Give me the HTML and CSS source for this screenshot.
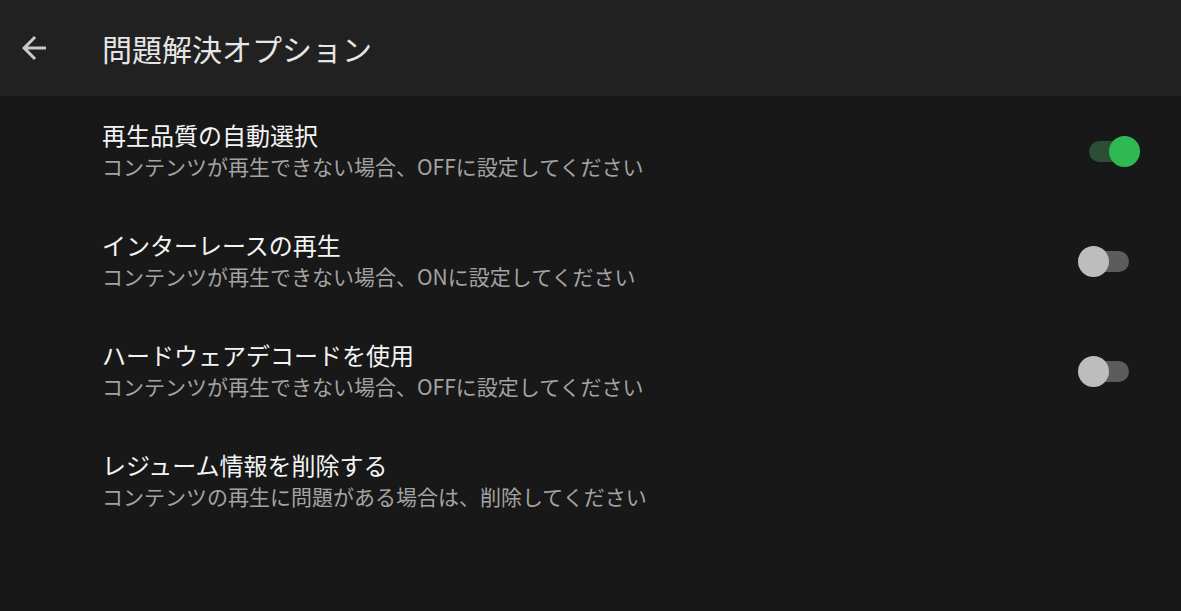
FILE: index.html
```html
<!DOCTYPE html>
<html lang="ja">
<head>
<meta charset="utf-8">
<link rel="stylesheet" href="styles.css">
</head>
<body>
<header class="appbar">
  <button class="back" aria-label="戻る">
    <svg viewBox="0 0 24 24" width="36" height="36"><path d="M20 11H7.83l5.59-5.59L12 4l-8 8 8 8 1.41-1.41L7.83 13H20v-2z" fill="#c9c9c9"/></svg>
  </button>
  <h1 class="title">問題解決オプション</h1>
</header>
<main class="list">
  <div class="row">
    <div class="text">
      <div class="primary">再生品質の自動選択</div>
      <div class="secondary">コンテンツが再生できない場合、OFFに設定してください</div>
    </div>
    <div class="switch on"><span class="track"></span><span class="thumb"></span></div>
  </div>
  <div class="row">
    <div class="text">
      <div class="primary">インターレースの再生</div>
      <div class="secondary">コンテンツが再生できない場合、ONに設定してください</div>
    </div>
    <div class="switch"><span class="track"></span><span class="thumb"></span></div>
  </div>
  <div class="row">
    <div class="text">
      <div class="primary">ハードウェアデコードを使用</div>
      <div class="secondary">コンテンツが再生できない場合、OFFに設定してください</div>
    </div>
    <div class="switch"><span class="track"></span><span class="thumb"></span></div>
  </div>
  <div class="row">
    <div class="text">
      <div class="primary">レジューム情報を削除する</div>
      <div class="secondary">コンテンツの再生に問題がある場合は、削除してください</div>
    </div>
  </div>
</main>
</body>
</html>
```

FILE: styles.css
```css
* { box-sizing: border-box; }
html, body {
  margin: 0;
  padding: 0;
  background: #181818;
  height: 100%;
}
body {
  font-family: "Noto Sans CJK JP", "Noto Sans", sans-serif;
  color: #f2f2f2;
}
.appbar {
  height: 96px;
  background: #212121;
  display: flex;
  align-items: center;
  padding-left: 16px;
}
.back {
  width: 36px;
  height: 36px;
  padding: 0;
  border: 0;
  background: none;
  display: flex;
}
.title {
  margin: 0 0 0 50px;
  font-size: 30px;
  font-weight: 400;
  color: #e6e6e6;
  line-height: 1;
}
.list {
  display: flex;
  flex-direction: column;
}
.row {
  height: 110px;
  display: flex;
  align-items: center;
  padding-left: 102px;
  padding-right: 41px;
}
.text {
  flex: 1;
  display: flex;
  flex-direction: column;
}
.primary {
  font-size: 24px;
  line-height: 30px;
  color: #f4f4f4;
}
.secondary {
  font-size: 21px;
  line-height: 32px;
  color: #a3a3a3;
}
.switch {
  position: relative;
  width: 62px;
  height: 31px;
}
.track {
  position: absolute;
  left: 11px;
  top: 5px;
  width: 40px;
  height: 21px;
  border-radius: 11px;
  background: #5c5c5c;
}
.thumb {
  position: absolute;
  left: 0;
  top: 0;
  width: 31px;
  height: 31px;
  border-radius: 50%;
  background: #bdbdbd;
}
.switch.on .track { background: #2a4f34; }
.switch.on .thumb { left: 31px; background: #30b953; }
```
